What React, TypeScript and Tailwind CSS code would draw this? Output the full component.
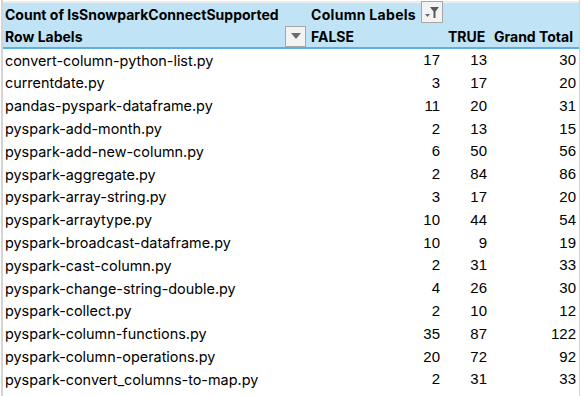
import React from "react";

const rows: [string, number, number, number][] = [
  ["convert-column-python-list.py", 17, 13, 30],
  ["currentdate.py", 3, 17, 20],
  ["pandas-pyspark-dataframe.py", 11, 20, 31],
  ["pyspark-add-month.py", 2, 13, 15],
  ["pyspark-add-new-column.py", 6, 50, 56],
  ["pyspark-aggregate.py", 2, 84, 86],
  ["pyspark-array-string.py", 3, 17, 20],
  ["pyspark-arraytype.py", 10, 44, 54],
  ["pyspark-broadcast-dataframe.py", 10, 9, 19],
  ["pyspark-cast-column.py", 2, 31, 33],
  ["pyspark-change-string-double.py", 4, 26, 30],
  ["pyspark-collect.py", 2, 10, 12],
  ["pyspark-column-functions.py", 35, 87, 122],
  ["pyspark-column-operations.py", 20, 72, 92],
  ["pyspark-convert_columns-to-map.py", 2, 31, 33],
];

const cols = "grid grid-cols-[304px_138px_46px_88px]";

function DropBtn() {
  return (
    <div className="w-[21px] h-[21px] border border-[#a6a6a6] bg-[#f3f3f3] flex items-center justify-center">
      <svg width="12" height="8" viewBox="0 0 12 8">
        <path d="M1 1 L11 1 L6 7 Z" fill="#6b6b6b" />
      </svg>
    </div>
  );
}

function FilterBtn() {
  return (
    <div className="w-[22px] h-[22px] border border-[#a6a6a6] bg-[#f3f3f3] flex items-center justify-center">
      <svg width="16" height="14" viewBox="0 0 16 14">
        <path d="M1 9 L6 9 L3.5 12 Z" fill="#6b6b6b" />
        <path d="M6 2 L15 2 L11.5 6.5 L11.5 13 L9.5 13 L9.5 6.5 Z" fill="#5a5a5a" />
      </svg>
    </div>
  );
}

const num = { fontFamily: "'Liberation Sans', sans-serif" };

export default function App() {
  return (
    <div
      className="w-[584px] h-[396px] bg-white overflow-hidden relative text-[14.4px] text-black"
      style={{ fontFamily: "Inter, 'Liberation Sans', sans-serif" }}
    >
      <div className="flex h-full">
        <div className="w-[1px]" />
        <div className="w-[2px] bg-[#d4d4d4]" />
        <div className="flex flex-col">
          <div className="h-[1px]" />
          <div className="h-[2px] bg-[#ececec]" />
          <div className="bg-[#c0e4f5] border-b-[2px] border-[#5fb0de] text-[14px]">
            <div className={`${cols} h-[22px] items-center font-bold`}>
              <div className="pl-[2px] whitespace-nowrap">Count of IsSnowparkConnectSupported</div>
              <div className="pl-[4px] whitespace-nowrap relative flex items-center">
                <span className="tracking-[0.3px]">Column Labels</span>
                <div className="absolute left-[114px] top-[-3px]">
                  <FilterBtn />
                </div>
              </div>
              <div />
              <div />
            </div>
            <div className={`${cols} h-[22px] items-center font-bold`}>
              <div className="pl-[2px] whitespace-nowrap flex items-center justify-between pr-[1px]">
                <span>Row Labels</span>
                <DropBtn />
              </div>
              <div className="pl-[4px]">FALSE</div>
              <div className="pl-[3px]">TRUE</div>
              <div className="pl-[3px] whitespace-nowrap">Grand Total</div>
            </div>
          </div>
          {rows.map((r) => (
            <div key={r[0]} className={`${cols} h-[22.8px] items-center`}>
              <div className="pl-[2px] whitespace-nowrap">{r[0]}</div>
              <div className="text-right pr-[5px] text-[15px]" style={num}>{r[1]}</div>
              <div className="text-right pr-[4px] text-[15px]" style={num}>{r[2]}</div>
              <div className="text-right pr-[3px] text-[15px]" style={num}>{r[3]}</div>
            </div>
          ))}
        </div>
        <div className="w-[1px] bg-[#d4d4d4]" />
        <div className="flex-1" />
      </div>
    </div>
  );
}
